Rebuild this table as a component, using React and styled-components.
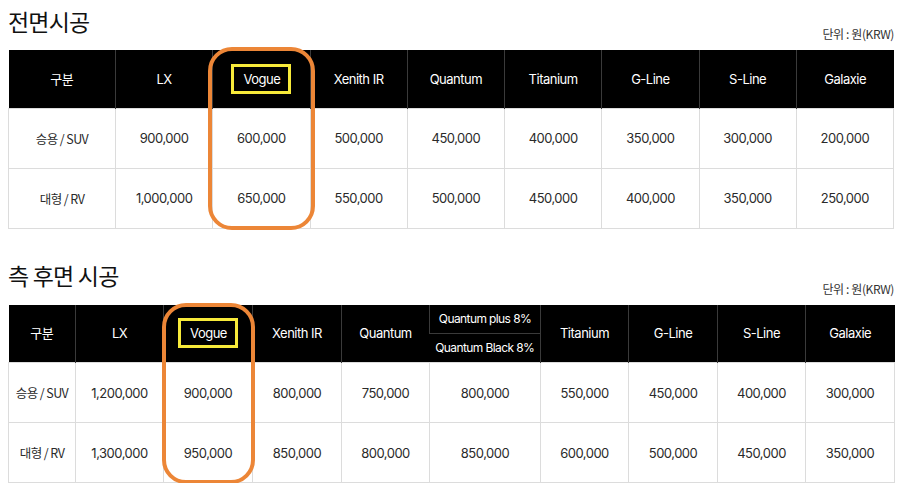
import React from "react";
import styled, { createGlobalStyle } from "styled-components";

const GlobalStyle = createGlobalStyle`
  html, body {
    margin: 0;
    padding: 0;
    background: #fff;
  }
  body {
    font-family: "Inter", "Noto Sans CJK KR", sans-serif;
    color: #222;
  }
`;

const Page = styled.div`
  width: 900px;
  padding: 0 6px 0 8px;
  box-sizing: border-box;
`;

const Section = styled.section`
  margin-top: ${(p) => p.$top}px;
`;

const Head = styled.div`
  height: ${(p) => p.$height}px;
  display: flex;
  justify-content: space-between;
  align-items: flex-start;
`;

const Title = styled.h2`
  margin: ${(p) => p.$offset}px 0 0;
  font-family: "Noto Sans CJK KR", "Inter", sans-serif;
  font-size: 23px;
  font-weight: 400;
  letter-spacing: -0.8px;
  line-height: 30px;
  color: #111;
`;

const Unit = styled.span`
  align-self: flex-end;
  margin-bottom: ${(p) => p.$bottom}px;
  font-family: "Noto Sans CJK KR", "Inter", sans-serif;
  font-size: 12px;
  letter-spacing: -0.4px;
  line-height: 14px;
  color: #333;
`;

const TableWrap = styled.div`
  position: relative;
`;

const Table = styled.table`
  width: 886px;
  border-collapse: collapse;
  table-layout: fixed;
  text-align: center;
  font-size: 13px;
  letter-spacing: -0.5px;
`;

const Th = styled.th`
  box-sizing: border-box;
  background: #000;
  color: #fff;
  font-weight: 400;
  font-size: ${(p) => (p.$small ? 12 : 13)}px;
  letter-spacing: ${(p) => (p.$small ? -0.6 : -0.5)}px;
  white-space: nowrap;
  line-height: 16px;
  height: ${(p) => p.$h}px;
  padding: 0;
  border-left: 1px solid #3a3a3a;
  border-bottom: ${(p) => (p.$split ? "1px solid #3a3a3a" : "none")};
  &:first-child {
    border-left: none;
  }
`;

const Td = styled.td`
  height: ${(p) => p.$h}px;
  padding: 0;
  border: 1px solid #dcdcdc;
  color: #2a2a2a;
  font-weight: 400;
`;

const Label = styled(Td)`
  font-family: "Noto Sans CJK KR", "Inter", sans-serif;
  letter-spacing: -0.6px;
  font-size: 12.5px;
`;

const HeadLabel = styled(Th)`
  font-family: "Noto Sans CJK KR", "Inter", sans-serif;
`;

const Marked = styled.span`
  display: inline-block;
  padding: 5px 8px 5px 9px;
  border: 3px solid #f7ea3a;
  line-height: 14px;
`;

const Ring = styled.div`
  position: absolute;
  left: ${(p) => p.$left}px;
  top: ${(p) => p.$top}px;
  width: ${(p) => p.$width}px;
  height: ${(p) => p.$height}px;
  border: 4px solid #ec8637;
  border-radius: 24px;
  box-sizing: border-box;
  pointer-events: none;
`;

const frontCols = ["LX", "Vogue", "Xenith IR", "Quantum", "Titanium", "G-Line", "S-Line", "Galaxie"];
const frontRows = [
  ["승용 / SUV", "900,000", "600,000", "500,000", "450,000", "400,000", "350,000", "300,000", "200,000"],
  ["대형 / RV", "1,000,000", "650,000", "550,000", "500,000", "450,000", "400,000", "350,000", "250,000"],
];

const sideRows = [
  ["승용 / SUV", "1,200,000", "900,000", "800,000", "750,000", "800,000", "550,000", "450,000", "400,000", "300,000"],
  ["대형 / RV", "1,300,000", "950,000", "850,000", "800,000", "850,000", "600,000", "500,000", "450,000", "350,000"],
];

const HeadText = ({ name }) => (name === "Vogue" ? <Marked>Vogue</Marked> : name);

function FrontTable() {
  return (
    <TableWrap>
      <Table>
        <colgroup>
          <col style={{ width: 107 }} />
          {frontCols.map((c) => (
            <col key={c} />
          ))}
        </colgroup>
        <thead>
          <tr>
            <HeadLabel $h={58}>구분</HeadLabel>
            {frontCols.map((c) => (
              <Th key={c} $h={58}>
                <HeadText name={c} />
              </Th>
            ))}
          </tr>
        </thead>
        <tbody>
          {frontRows.map((r) => (
            <tr key={r[0]}>
              <Label $h={59}>{r[0]}</Label>
              {r.slice(1).map((v, i) => (
                <Td key={i} $h={59}>
                  {v}
                </Td>
              ))}
            </tr>
          ))}
        </tbody>
      </Table>
      <Ring $left={200} $top={-3} $width={107} $height={183} />
    </TableWrap>
  );
}

function SideTable() {
  const widths = [67, 88, 89, 89, 88, 111, 88, 89, 88, 89];
  return (
    <TableWrap>
      <Table>
        <colgroup>
          {widths.map((w, i) => (
            <col key={i} style={{ width: w }} />
          ))}
        </colgroup>
        <thead>
          <tr>
            <HeadLabel $h={29} rowSpan={2}>구분</HeadLabel>
            <Th $h={29} rowSpan={2}>LX</Th>
            <Th $h={29} rowSpan={2}>
              <HeadText name="Vogue" />
            </Th>
            <Th $h={29} rowSpan={2}>Xenith IR</Th>
            <Th $h={29} rowSpan={2}>Quantum</Th>
            <Th $h={29} $split $small>Quantum plus 8%</Th>
            <Th $h={29} rowSpan={2}>Titanium</Th>
            <Th $h={29} rowSpan={2}>G-Line</Th>
            <Th $h={29} rowSpan={2}>S-Line</Th>
            <Th $h={29} rowSpan={2}>Galaxie</Th>
          </tr>
          <tr>
            <Th $h={29} $small>Quantum Black 8%</Th>
          </tr>
        </thead>
        <tbody>
          {sideRows.map((r) => (
            <tr key={r[0]}>
              <Label $h={59}>{r[0]}</Label>
              {r.slice(1).map((v, i) => (
                <Td key={i} $h={59}>
                  {v}
                </Td>
              ))}
            </tr>
          ))}
        </tbody>
      </Table>
      <Ring $left={154} $top={-2} $width={93} $height={181} />
    </TableWrap>
  );
}

export default function App() {
  return (
    <Page>
      <GlobalStyle />
      <Section $top={0}>
        <Head $height={50}>
          <Title $offset={6}>전면시공</Title>
          <Unit $bottom={9}>단위 : 원(KRW)</Unit>
        </Head>
        <FrontTable />
      </Section>
      <Section $top={26}>
        <Head $height={50}>
          <Title $offset={5}>측 후면 시공</Title>
          <Unit $bottom={9}>단위 : 원(KRW)</Unit>
        </Head>
        <SideTable />
      </Section>
    </Page>
  );
}
